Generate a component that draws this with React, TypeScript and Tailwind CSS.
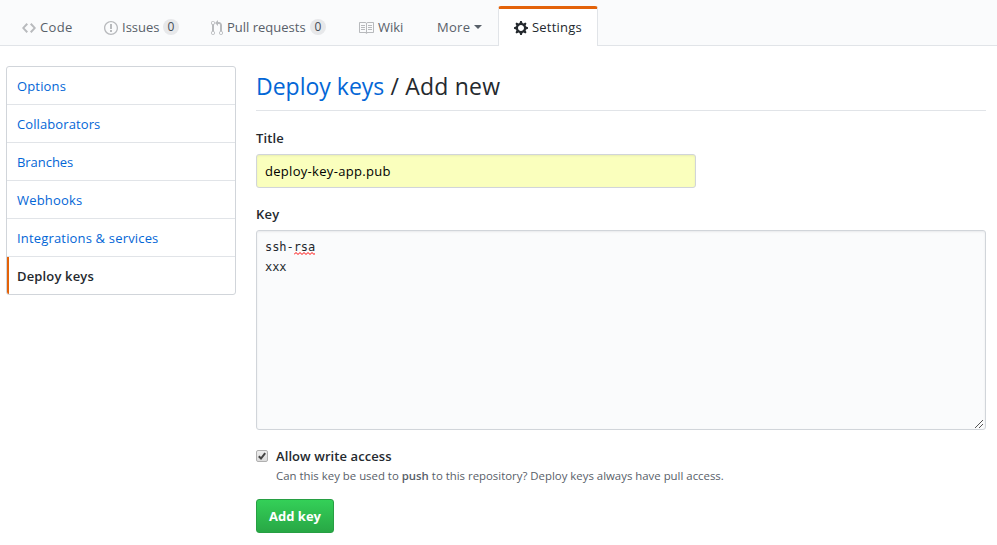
import React from "react";

const icons = {
  code: { w: 14, d: "M9.5 3L8 4.5 11.5 8 8 11.5 9.5 13 14 8 9.5 3zm-5 0L0 8l4.5 5L6 11.5 2.5 8 6 4.5 4.5 3z" },
  issue: { w: 14, d: "M7 2.3c3.14 0 5.7 2.56 5.7 5.7s-2.56 5.7-5.7 5.7A5.71 5.71 0 0 1 1.3 8c0-3.14 2.56-5.7 5.7-5.7zM7 1C3.14 1 0 4.14 0 8s3.14 7 7 7 7-3.14 7-7-3.14-7-7-7zm1 3H6v5h2V4zm0 6H6v2h2v-2z" },
  pull: { w: 12, d: "M11 11.28V5c-.03-.78-.34-1.47-.94-2.06C9.46 2.35 8.78 2.03 8 2H7V0L4 3l3 3V4h1c.27.02.48.11.69.31.21.2.3.42.31.69v6.28A1.993 1.993 0 0 0 10 15a1.993 1.993 0 0 0 1-3.72zm-1 2.92c-.66 0-1.2-.55-1.2-1.2 0-.65.55-1.2 1.2-1.2.65 0 1.2.55 1.2 1.2 0 .65-.55 1.2-1.2 1.2zM4 3c0-1.11-.89-2-2-2a1.993 1.993 0 0 0-1 3.72v6.56A1.993 1.993 0 0 0 2 15a1.993 1.993 0 0 0 1-3.72V4.72c.59-.34 1-.98 1-1.72zm-.8 10c0 .66-.55 1.2-1.2 1.2-.65 0-1.2-.55-1.2-1.2 0-.65.55-1.2 1.2-1.2.65 0 1.2.55 1.2 1.2zM2 4.2C1.34 4.2.8 3.65.8 3c0-.65.55-1.2 1.2-1.2.65 0 1.2.55 1.2 1.2 0 .65-.55 1.2-1.2 1.2z" },
  book: { w: 16, d: "M3 5h4v1H3V5zm0 3h4V7H3v1zm0 2h4V9H3v1zm11-5h-4v1h4V5zm0 2h-4v1h4V7zm0 2h-4v1h4V9zm2-6v9c0 .55-.45 1-1 1H9.5l-1 1-1-1H2c-.55 0-1-.45-1-1V3c0-.55.45-1 1-1h5.5l1 1 1-1H15c.55 0 1 .45 1 1zm-8 .5L7.5 3H2v9h6V3.5zm7-.5H9.5l-.5.5V12h6V3z" },
  gear: { w: 14, d: "M14 8.77v-1.6l-1.94-.64-.45-1.09.88-1.84-1.13-1.13-1.81.91-1.09-.45-.69-1.92h-1.6l-.63 1.94-1.11.45-1.84-.88-1.13 1.13.91 1.81-.45 1.09L0 7.23v1.59l1.94.64.45 1.09-.88 1.84 1.13 1.13 1.81-.91 1.09.45.69 1.92h1.59l.63-1.94 1.11-.45 1.84.88 1.13-1.13-.92-1.81.47-1.09L14 8.75v.02zM7 11c-1.66 0-3-1.34-3-3s1.34-3 3-3 3 1.34 3 3-1.34 3-3 3z" },
};

function Octicon({ name, className = "" }: { name: keyof typeof icons; className?: string }) {
  const { w, d } = icons[name];
  return (
    <svg width={w} height={16} viewBox={`0 0 ${w} 16`} className={`mt-px shrink-0 fill-current ${className}`}>
      <path d={d} />
    </svg>
  );
}

type TabProps = {
  icon: keyof typeof icons;
  label: string;
  width: string;
  labelWidth: string;
  count?: number;
};

function Tab({ icon, label, width, labelWidth, count }: TabProps) {
  return (
    <a className={`mb-[-3px] flex h-[42px] shrink-0 items-center ${width}`}>
      <Octicon name={icon} className="text-[#b8babd]" />
      <span className={`ml-1 shrink-0 ${labelWidth}`}>{label}</span>
      {count !== undefined && (
        <span className="flex h-4 w-4 items-center justify-center rounded-full bg-[#e7e8ea] text-[12px] font-medium text-[#444d56]">
          {count}
        </span>
      )}
    </a>
  );
}

const links = [
  { label: "Options", tracking: "tracking-[0.15px]" },
  { label: "Collaborators", tracking: "tracking-[0.1px]" },
  { label: "Branches", tracking: "tracking-[-0.05px]" },
  { label: "Webhooks", tracking: "tracking-[0.2px]" },
  { label: "Integrations & services", tracking: "tracking-[0.17px]" },
];

export default function App() {
  return (
    <div className="h-[545px] w-[997px] overflow-hidden bg-white font-['Open_Sans',sans-serif] text-[13px] leading-5 text-[#24292e]">
      <nav className="flex h-[46px] items-end border-b border-[#e1e4e8] bg-[#fafbfc] pl-[22px] whitespace-nowrap text-[#586069]">
        <Tab icon="code" label="Code" width="w-[82px] tracking-[0.35px]" labelWidth="w-[34px]" />
        <Tab icon="issue" label="Issues" width="w-[107px]" labelWidth="w-[41px]" count={0} />
        <Tab icon="pull" label="Pull requests" width="w-[147px]" labelWidth="w-[83px]" count={0} />
        <Tab icon="book" label="Wiki" width="w-[79px]" labelWidth="w-[30px]" />
        <a className="mb-[-3px] flex h-[42px] w-[61px] shrink-0 items-center tracking-[0.3px]">
          <span className="w-[37px]">More</span>
          <span className="h-0 w-0 border-x-4 border-t-4 border-x-transparent border-t-[#586069]" />
        </a>
        <a className="-mb-px flex h-10 w-[100px] shrink-0 items-center rounded-t-[3px] border-x border-t-[3px] border-x-[#e1e4e8] border-t-[#e36209] bg-white pl-[15px] tracking-[0.2px] text-[#24292e]">
          <Octicon name="gear" />
          <span className="ml-1 pb-0.5">Settings</span>
        </a>
      </nav>

      <div className="flex pt-5 pl-1.5">
        <aside className="h-[229px] w-[230px] shrink-0 overflow-hidden rounded-[3px] border border-[#d1d5da]">
          {links.map((l) => (
            <a key={l.label} className={`block h-[38px] border-b border-[#e1e4e8] pt-[9px] pl-2.5 text-[#0366d6] ${l.tracking}`}>
              {l.label}
            </a>
          ))}
          <a className="block h-[37px] border-l-2 border-[#e36209] pt-[9px] pl-2 font-semibold tracking-[0.15px]">Deploy keys</a>
        </aside>

        <main className="ml-5 w-[730px]">
          <h2 className="h-[45px] border-b border-[#e1e4e8] pt-1 text-[23px] leading-8 tracking-[0.2px]">
            <a className="tracking-[0px] text-[#0366d6]">Deploy keys</a> / Add new
          </h2>
          <label className="mt-[17px] block font-semibold tracking-[0.1px]">Title</label>
          <div className="mt-1.5 h-[34px] w-[440px] rounded-[3px] border border-[#d1d5da] bg-[#faffbd] px-2 pt-1.5 tracking-[0.3px] text-black shadow-[inset_0_1px_2px_rgba(27,31,35,0.075)]">
            deploy-key-app.pub
          </div>
          <label className="mt-4 block font-semibold tracking-[0.2px]">Key</label>
          <div className="relative mt-1.5 h-[200px] rounded-[3px] border border-[#d1d5da] bg-[#fafbfc] px-2 pt-1.5 font-['DejaVu_Sans_Mono',monospace] text-[12px] tracking-[-0.07px] shadow-[inset_0_1px_2px_rgba(27,31,35,0.075)]">
            <div>
              ssh-
              <span className="relative inline-block">
                rsa
                <svg width="21" height="3" viewBox="0 0 21 3" className="absolute bottom-0.5 left-0">
                  <path d="M0 2.5l2-2 2 2 2-2 2 2 2-2 2 2 2-2 2 2 2-2 2 2 2-2" fill="none" stroke="#f00" strokeWidth="1" />
                </svg>
              </span>
            </div>
            <div>xxx</div>
            <svg width="9" height="9" viewBox="0 0 9 9" shapeRendering="crispEdges" className="absolute right-px bottom-px fill-[#555]">
              {[0, 1, 2, 3, 4, 5, 6, 7].map((i) => (
                <rect key={i} x={i} y={8 - i} width="1" height="1" />
              ))}
              {[0, 1, 2, 3].map((i) => (
                <rect key={`s${i}`} x={4 + i} y={8 - i} width="1" height="1" />
              ))}
            </svg>
          </div>
          <div className="mt-4 flex">
            <span className="mt-1 flex h-3 w-3 items-center justify-center rounded-[2px] border border-[#b0b0b0] bg-gradient-to-b from-[#eee] to-[#dcdcdc]">
              <svg width="10" height="10" viewBox="0 0 10 10" className="shrink-0">
                <path d="M1.8 5.2l2.2 2.3L8.2 2.2" fill="none" stroke="#444" strokeWidth="2" />
              </svg>
            </span>
            <div className="ml-2">
              <div className="font-semibold tracking-[0.08px]">Allow write access</div>
              <p className="mt-px h-[17px] text-[11.4px] leading-[18px] whitespace-nowrap text-[#586069]">
                Can this key be used to <b className="font-semibold">push</b> to this repository? Deploy keys always have pull access.
              </p>
            </div>
          </div>
          <button className="mt-[15px] block h-[34px] w-[78px] rounded-[3px] border border-[#279f43] bg-gradient-to-b from-[#34d058] to-[#28a745] text-[13px] font-bold text-white">
            Add key
          </button>
        </main>
      </div>
    </div>
  );
}
